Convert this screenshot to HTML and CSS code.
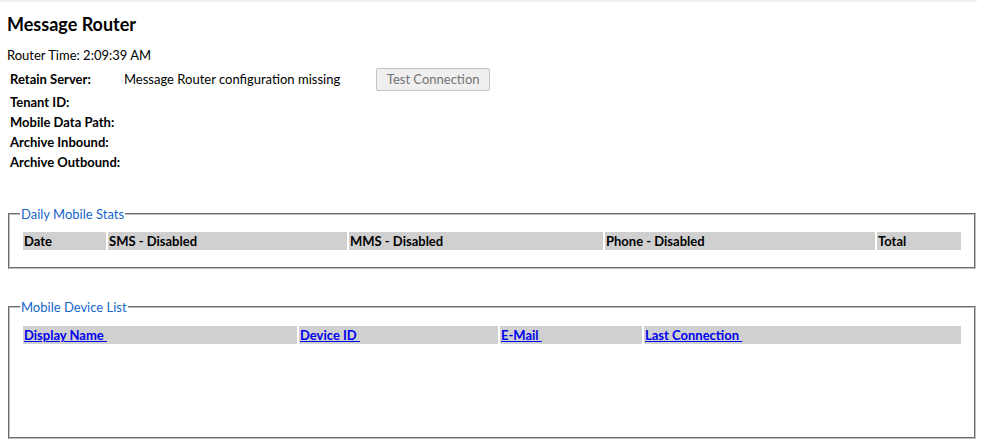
FILE: index.html
```html
<!DOCTYPE html>
<html>
<head>
<meta charset="utf-8">
<link rel="stylesheet" href="styles.css">
</head>
<body>
<div class="page">
  <h1 class="title">Message Router</h1>
  <div class="router-time">Router Time: 2:09:39 AM</div>
  <div class="info">
    <div class="label">Retain Server:</div>
    <div class="value">Message Router configuration missing</div>
    <div class="action"><button class="btn" disabled>Test Connection</button></div>
    <div class="label">Tenant ID:</div><div class="value"></div><div></div>
    <div class="label">Mobile Data Path:</div><div class="value"></div><div></div>
    <div class="label">Archive Inbound:</div><div class="value"></div><div></div>
    <div class="label">Archive Outbound:</div><div class="value"></div><div></div>
  </div>

  <fieldset class="box box-stats">
    <legend class="legend">Daily Mobile Stats</legend>
    <table class="grid">
      <tr>
        <th class="c-date">Date</th>
        <th class="c-sms">SMS - Disabled</th>
        <th class="c-mms">MMS - Disabled</th>
        <th class="c-phone">Phone - Disabled</th>
        <th class="c-total">Total</th>
      </tr>
    </table>
  </fieldset>

  <fieldset class="box box-devices">
    <legend class="legend">Mobile Device List</legend>
    <table class="grid">
      <tr>
        <th class="c-name"><a href="#">Display Name&nbsp;</a></th>
        <th class="c-dev"><a href="#">Device ID&nbsp;</a></th>
        <th class="c-mail"><a href="#">E-Mail&nbsp;</a></th>
        <th class="c-last"><a href="#">Last Connection&nbsp;</a></th>
      </tr>
    </table>
  </fieldset>
</div>
</body>
</html>
```

FILE: styles.css
```css
html, body {
  margin: 0;
  padding: 0;
  background: #ffffff;
}
body {
  font-family: Lato, "Open Sans", sans-serif;
  font-size: 13px;
  color: #000;
}
.page {
  width: 977px;
  border-top: 2px solid #f0f0f0;
  padding-top: 11px;
}
.title {
  margin: 0 0 0 7px;
  font-size: 18px;
  font-weight: 700;
  line-height: 22px;
}
.router-time {
  margin: 12px 0 0 7px;
  line-height: 16px;
}
.info {
  display: grid;
  grid-template-columns: 114px max-content max-content;
  grid-auto-rows: 20px;
  grid-template-rows: 26px;
  margin: 3px 0 0 10px;
  align-items: center;
}
.label {
  font-weight: 700;
}
.action {
  padding-left: 36px;
}
.btn {
  font-family: Lato, "Open Sans", sans-serif;
  font-size: 13px;
  color: #737373;
  background: #efefef;
  border: 1px solid #c4c4c4;
  border-radius: 2px;
  width: 114px;
  height: 23px;
  padding: 0;
}
.box {
  margin: 0 0 0 8px;
  width: 968px;
  box-sizing: border-box;
  border: 2px groove #c0c0c0;
  padding: 9px 10px 15px 11px;
  min-width: 0;
}
.box-stats {
  margin-top: 35px;
}
.box-devices {
  margin-top: 31px;
  padding-top: 10px;
  height: 139px;
}
.legend {
  color: #1566c8;
  padding: 0 1px;
  margin-left: -1px;
  font-size: 13px;
  line-height: 14px;
}
.grid {
  border-spacing: 2px;
  width: 942px;
  table-layout: fixed;
}
.grid th {
  background: #d0d0d0;
  text-align: left;
  font-weight: 700;
  padding: 1px;
  line-height: 16px;
  white-space: nowrap;
}
.grid a {
  color: #0000ee;
  text-decoration: underline;
}
.c-date { width: 81px; }
.c-sms { width: 237px; }
.c-mms { width: 252px; }
.c-phone { width: 268px; }
.c-total { width: auto; }
.c-name { width: 272px; }
.c-dev { width: 197px; }
.c-mail { width: 140px; }
.c-last { width: auto; }
```
